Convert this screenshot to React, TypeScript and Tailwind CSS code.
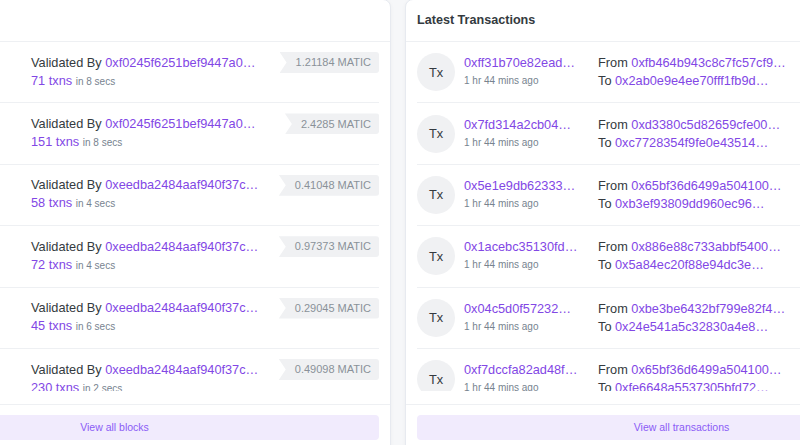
import React from 'react';

const BLOCKS = [
  { num: '41820193', age: '8 secs ago', validator: '0xf0245f6251bef9447a0…', txns: 71, secs: 8, reward: '1.21184 MATIC' },
  { num: '41820192', age: '16 secs ago', validator: '0xf0245f6251bef9447a0…', txns: 151, secs: 8, reward: '2.4285 MATIC' },
  { num: '41820191', age: '20 secs ago', validator: '0xeedba2484aaf940f37c…', txns: 58, secs: 4, reward: '0.41048 MATIC' },
  { num: '41820190', age: '24 secs ago', validator: '0xeedba2484aaf940f37c…', txns: 72, secs: 4, reward: '0.97373 MATIC' },
  { num: '41820189', age: '30 secs ago', validator: '0xeedba2484aaf940f37c…', txns: 45, secs: 6, reward: '0.29045 MATIC' },
  { num: '41820188', age: '32 secs ago', validator: '0xeedba2484aaf940f37c…', txns: 230, secs: 2, reward: '0.49098 MATIC' },
];

const TXNS = [
  { hash: '0xff31b70e82ead…', from: '0xfb464b943c8c7fc57cf9…', to: '0x2ab0e9e4ee70fff1fb9d…' },
  { hash: '0x7fd314a2cb04…', from: '0xd3380c5d82659cfe00…', to: '0xc7728354f9fe0e43514…' },
  { hash: '0x5e1e9db62333…', from: '0x65bf36d6499a504100…', to: '0xb3ef93809dd960ec96…' },
  { hash: '0x1acebc35130fd…', from: '0x886e88c733abbf5400…', to: '0x5a84ec20f88e94dc3e…' },
  { hash: '0x04c5d0f57232…', from: '0xbe3be6432bf799e82f4…', to: '0x24e541a5c32830a4e8…' },
  { hash: '0xf7dccfa82ad48f…', from: '0x65bf36d6499a504100…', to: '0xfe6648a5537305bfd72…' },
];

const Badge: React.FC<{ value: string }> = ({ value }) => (
  <span className="h-[21px] pl-[16px] pr-[8px] flex items-center bg-[#f0f1f3] text-[#8a9199] text-[11px] rounded-r-[3px] [clip-path:polygon(0_0,100%_0,100%_100%,0_100%,7px_50%)]">
    {value}
  </span>
);

const Card: React.FC<{ title: string; footer: string; children: React.ReactNode }> = ({ title, footer, children }) => (
  <div className="w-[553px] shrink-0 bg-white border border-[#e7eaf0] rounded-lg shadow-[0_1px_4px_rgba(0,0,0,0.04)]">
    <div className="h-[42px] px-[11px] flex items-center border-b border-[#eef0f3]">
      <h2 className="text-[12.6px] font-bold text-[#343a40]">{title}</h2>
    </div>
    <div className="h-[349px] overflow-hidden px-[11px]">{children}</div>
    <div className="h-[13px]" />
    <div className="border-t border-[#eef0f3] px-[11px] pt-[10px] pb-[12px]">
      <button className="w-full h-[25px] rounded-[4px] bg-[#f1ebfd] text-[#8b5cf6] text-[10.5px]">{footer}</button>
    </div>
  </div>
);

export default function App() {
  return (
    <div className="w-[800px] h-[445px] overflow-hidden bg-[#f6f7f9] font-['Liberation_Sans',Arial,sans-serif] text-[12.75px] text-[#343a40]">
      <div className="flex gap-[14px] ml-[-162px] -mt-px">
        <Card title="Latest Blocks" footer="View all blocks">
          {BLOCKS.map((b) => (
            <div key={b.num} className="h-[61.4px] border-b border-[#eef0f3] flex items-center">
              <div className="w-[181px] flex items-center gap-[9px]">
                <div className="w-[38px] h-[38px] rounded-full bg-[#f0f1f3] flex items-center justify-center">Bk</div>
                <div className="leading-[18px]">
                  <div className="text-[#8247e5]">{b.num}</div>
                  <div className="text-[10px] text-[#77838f]">{b.age}</div>
                </div>
              </div>
              <div className="flex-1 leading-[18px]">
                <div>
                  Validated By <span className="text-[#8247e5]">{b.validator}</span>
                </div>
                <div>
                  <span className="text-[#8247e5]">{b.txns} txns</span>{' '}
                  <span className="text-[10px] text-[#77838f]">in {b.secs} secs</span>
                </div>
              </div>
              <div className="self-start mt-[10px]">
                <Badge value={b.reward} />
              </div>
            </div>
          ))}
        </Card>
        <Card title="Latest Transactions" footer="View all transactions">
          {TXNS.map((t) => (
            <div key={t.hash} className="h-[61.4px] border-b border-[#eef0f3] flex items-center">
              <div className="w-[181px] flex items-center gap-[9px]">
                <div className="w-[38px] h-[38px] rounded-full bg-[#f0f1f3] flex items-center justify-center">Tx</div>
                <div className="leading-[18px]">
                  <div className="text-[#8247e5]">{t.hash}</div>
                  <div className="text-[10px] text-[#77838f]">1 hr 44 mins ago</div>
                </div>
              </div>
              <div className="flex-1 leading-[18px]">
                <div>
                  From <span className="text-[#8247e5]">{t.from}</span>
                </div>
                <div>
                  To <span className="text-[#8247e5]">{t.to}</span>
                </div>
              </div>
              <div className="self-start mt-[10px]">
                <Badge value="0 MATIC" />
              </div>
            </div>
          ))}
        </Card>
      </div>
    </div>
  );
}
